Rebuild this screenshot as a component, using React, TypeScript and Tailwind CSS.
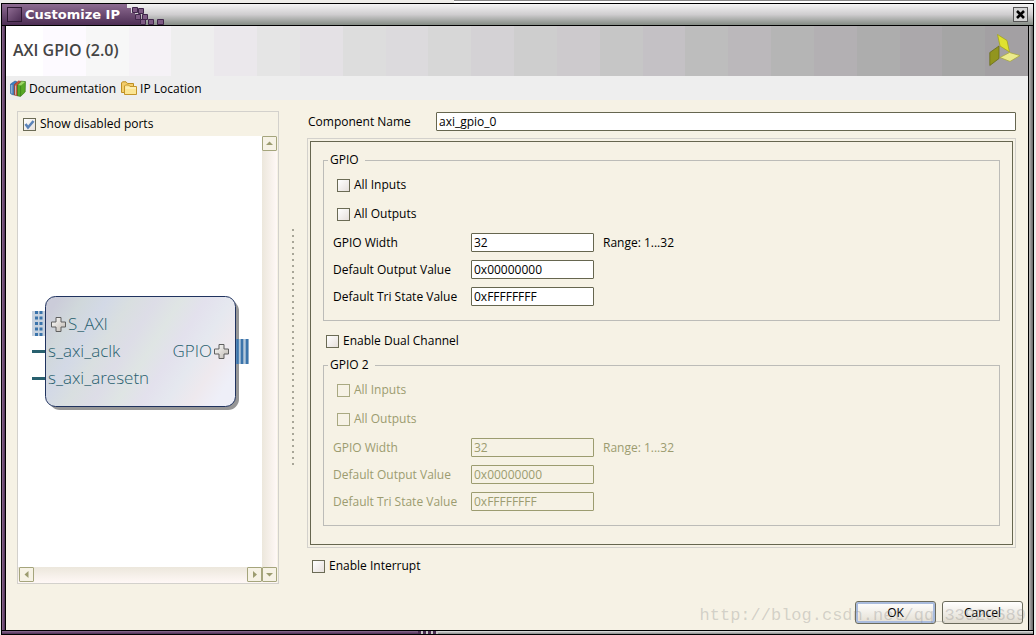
import { useState } from 'react';
import { clsx } from 'clsx';

interface CheckProps {
  id: string;
  label: string;
  checked?: boolean;
  disabled?: boolean;
  onChange?: (checked: boolean) => void;
}

const Check = ({ id, label, checked = false, disabled = false, onChange }: CheckProps) => (
  <label htmlFor={id} className={clsx('flex items-center gap-1 leading-4', disabled ? 'text-[#9c9c70]' : 'text-black')}>
    <span className="relative flex h-[13px] w-[13px] shrink-0">
      <input
        id={id}
        type="checkbox"
        checked={checked}
        disabled={disabled}
        onChange={(e) => onChange?.(e.target.checked)}
        className={clsx(
          'h-[13px] w-[13px] appearance-none border',
          disabled ? 'border-[#a9a981] bg-[#f6f2e5]' : 'border-[#6b6b55] bg-linear-to-br from-white to-[#e6e0dc]',
        )}
      />
      {checked && (
        <svg viewBox="0 0 13 13" className="pointer-events-none absolute inset-0 h-[13px] w-[13px]">
          <path d="M2.5 6 L5 9.5 L10.5 3" fill="none" stroke="#5b83b8" strokeWidth="2.6" />
        </svg>
      )}
    </span>
    {label}
  </label>
);

interface FieldProps {
  id: string;
  label: string;
  value: string;
  hint?: string;
  disabled?: boolean;
}

const Field = ({ id, label, value, hint, disabled = false }: FieldProps) => (
  <div className={clsx('flex h-[19px] items-center', disabled ? 'text-[#9c9c70]' : 'text-black')}>
    <label htmlFor={id} className="w-[138px] shrink-0 whitespace-nowrap">{label}</label>
    <input
      id={id}
      type="text"
      defaultValue={value}
      disabled={disabled}
      className={clsx(
        'h-[19px] w-[123px] rounded-[1px] border px-0.5 outline-none',
        disabled ? 'border-[#9c9c70] bg-[#f6f2e5]' : 'border-[#66664f] bg-white',
      )}
    />
    {hint && <span className="ml-[9px]">{hint}</span>}
  </div>
);

interface ChannelProps {
  id: string;
  title: string;
  disabled?: boolean;
}

const Channel = ({ id, title, disabled }: ChannelProps) => {
  const [inputs, setInputs] = useState(false);
  const [outputs, setOutputs] = useState(false);

  return (
    <fieldset className="border border-[#bcbcb8] pb-[14px] pl-[9px]">
      <legend className="-ml-[5px] pr-1.5 pl-0.5 leading-4">{title}</legend>
      <div className="flex flex-col gap-[13px] pt-[9px] pl-1">
        <Check id={`${id}-inputs`} label="All Inputs" checked={inputs} disabled={disabled} onChange={setInputs} />
        <Check id={`${id}-outputs`} label="All Outputs" checked={outputs} disabled={disabled} onChange={setOutputs} />
      </div>
      <div className="flex flex-col gap-2 pt-[11px]">
        <Field id={`${id}-width`} label="GPIO Width" value="32" hint="Range: 1...32" disabled={disabled} />
        <Field id={`${id}-output`} label="Default Output Value" value="0x00000000" disabled={disabled} />
        <Field id={`${id}-tri`} label="Default Tri State Value" value="0xFFFFFFFF" disabled={disabled} />
      </div>
    </fieldset>
  );
};

const arrows = {
  up: 'M3 8 L6.5 4.5 L10 8 Z',
  down: 'M3 5 L6.5 8.5 L10 5 Z',
  left: 'M8.5 3 L4.5 6.5 L8.5 10 Z',
  right: 'M5 3 L9 6.5 L5 10 Z',
};

const ScrollButton = ({ dir }: { dir: keyof typeof arrows }) => (
  <button type="button" aria-label={`Scroll ${dir}`} className="h-[15px] w-[15px] shrink-0 rounded-[1px] border border-[#a5a57c] bg-[#f6f2e5]">
    <svg viewBox="0 0 13 13" className="h-[13px] w-[13px]">
      <path d={arrows[dir]} fill="#9c9c70" />
    </svg>
  </button>
);

const plus = 'M5 0.5 H10 V5 H14.5 V10 H10 V14.5 H5 V10 H0.5 V5 H5 Z';

// Tints that run diagonally across the block
const sheen = ['#cbccd9', '#d0d8db', '#d3d9e6', '#d9dfe0', '#dddde7', '#dfe5e4', '#e3e1ed', '#e5e8ef', '#eee9ee', '#eeeff8'];

const BlockDiagram = () => (
  <svg width="222" height="120" viewBox="0 0 222 120" fontSize="17" fontWeight="300" fill="#28606e" role="img" aria-label="AXI GPIO block symbol">
    <defs>
      <linearGradient id="block" gradientUnits="userSpaceOnUse" x1="30" y1="0" x2="190" y2="100">
        {sheen.map((color, i) => (
          <stop key={color} offset={i / (sheen.length - 1)} stopColor={color} />
        ))}
      </linearGradient>
      <linearGradient id="plus" x1="0" y1="0" x2="1" y2="1">
        <stop offset="0" stopColor="#fff" />
        <stop offset="1" stopColor="#bdb6ae" />
      </linearGradient>
    </defs>
    <rect x="18" y="6" width="190" height="110" rx="11" fill="#969696" />
    <rect x="14.5" y="2.5" width="190" height="110" rx="10" fill="url(#block)" stroke="#20335f" />
    <rect x="1" y="17" width="13" height="25" fill="#c7d2df" />
    <path d="M5.5 17 V42 M10 17 V42" stroke="#3b74ab" strokeWidth="3" strokeDasharray="3 2.5" fill="none" />
    <path d="M1 57.5 H14 M1 84.5 H14" stroke="#28606e" strokeWidth="3" />
    <rect x="205" y="45" width="13" height="25" fill="#b5c9dc" />
    <path d="M206.5 45 V70 M211 45 V70 M216 45 V70" stroke="#3b74ab" strokeWidth="2.6" />
    <path d={plus} transform="translate(20 23)" fill="url(#plus)" stroke="#5f5f5f" />
    <path d={plus} transform="translate(183 50)" fill="url(#plus)" stroke="#5f5f5f" />
    <text x="37" y="36">S_AXI</text>
    <text x="17" y="63">s_axi_aclk</text>
    <text x="17" y="90">s_axi_aresetn</text>
    <text x="181" y="63" textAnchor="end">GPIO</text>
  </svg>
);

const BooksIcon = () => (
  <svg width="16" height="17" viewBox="0 0 16 17">
    <path d="M0.5 4 L5 1 L7 1.8 L4.5 4.8 L4.5 15 L2 14.5 L0.5 13.5 Z" fill="#3f7fc0" stroke="#2c5f96" strokeWidth="0.6" />
    <path d="M4.3 4.6 L8.5 1 L11 1.4 L7.5 5.2 L7.5 15.8 L4.3 15 Z" fill="#c8543a" stroke="#8c2f20" strokeWidth="0.6" />
    <path d="M7.5 5 L11.5 1.2 L15.5 1.6 L15.2 12 L10.5 16.5 L7.5 15.8 Z" fill="#57a827" stroke="#2f6d14" strokeWidth="0.6" />
    <path d="M8 5 L11.8 1.6 L15 2 L11 5.5 Z" fill="#9fd468" />
    <path d="M10.6 5.8 V16" stroke="#3f8a1c" />
    <path d="M1.8 5 V13.5 M5.6 5.6 V14.8" stroke="#c9d6e4" strokeWidth="0.8" />
  </svg>
);

const FolderIcon = () => (
  <svg width="16" height="15" viewBox="0 0 16 15">
    <path d="M0.5 11.5 V2 L1.5 0.8 H5 L6.5 2.5 H12.5 V11.5 Z" fill="#f3cd6b" stroke="#bd8f23" />
    <path d="M3.5 13.5 V5 L4.5 4 H7.5 L9 5.5 H15.5 V13.5 Z" fill="#fbe594" stroke="#c4952a" />
    <path d="M4.5 7 H15" stroke="#fff7cf" />
  </svg>
);

const Logo = () => (
  <svg width="32" height="33" viewBox="0 0 32 33">
    <path d="M8.5 0.5 L18 6.5 L20.5 18 L11 12 Z" fill="#e0e22f" stroke="#a2a31e" strokeWidth="0.8" />
    <path d="M0.8 18.5 L10 12 V24.5 L0.8 31.5 Z" fill="#92951f" stroke="#696c17" strokeWidth="0.8" />
    <path d="M11 23.5 L20.5 18.5 L31 21.5 L21 27.5 Z" fill="#ebeb8c" stroke="#a8a83f" strokeWidth="0.8" />
  </svg>
);

// Stepped shades of the banner, left to right
const bands = [
  'bg-[#ffffff]', 'bg-[#fdfaff]', 'bg-[#f7f7f7]', 'bg-[#f5f2f6]', 'bg-[#eeeeee]', 'bg-[#ebe8ec]',
  'bg-[#e5e5e5]', 'bg-[#e4e1e5]', 'bg-[#dddddd]', 'bg-[#dcdadd]', 'bg-[#d7d7d7]', 'bg-[#d4d2d5]',
  'bg-[#cecece]', 'bg-[#cdcacd]', 'bg-[#c6c6c6]', 'bg-[#c4c1c5]', 'bg-[#bdbdbd]', 'bg-[#bbb8bb]',
  'bg-[#b5b5b5]', 'bg-[#b3b0b3]', 'bg-[#adadad]', 'bg-[#aba8ab]', 'bg-[#a5a5a5]', 'bg-[#a3a0a3]',
];

const TitleBar = () => (
  <div className="flex h-[23px] shrink-0 border-y border-black bg-linear-to-b from-[#f4f4f4] via-[#cfcdcf] to-[#858c85]">
    <div className="flex items-center gap-[3px] bg-linear-to-b from-[#8d6b91] to-[#4d2e54] pl-[5px]">
      <span className="h-[15px] w-[15px] border border-[#2b1730] bg-linear-to-br from-[#8d6b91] to-[#4d2e54]" />
      <h1 className="text-[13px] leading-4 font-bold text-white [font-family:'DejaVu_Sans',sans-serif]">Customize IP</h1>
    </div>
    <svg width="46" height="21" viewBox="0 0 46 21" className="shrink-0">
      <defs>
        <linearGradient id="cap" x1="0" y1="0" x2="0" y2="1">
          <stop offset="0" stopColor="#8d6b91" />
          <stop offset="1" stopColor="#4d2e54" />
        </linearGradient>
      </defs>
      <path d="M0 0 H7 V4 H11 V9 H15 V15 H20 V21 H0 Z" fill="url(#cap)" />
      <path
        d="M12.5 3.5 h5 v5 h-5 Z M18.5 4.5 h5 v5 h-5 Z M15.5 10.5 h5 v5 h-5 Z M22.5 10.5 h5 v5 h-5 Z M20.5 15.5 h5 v5 h-5 Z M28.5 15.5 h5 v5 h-5 Z M37.5 15.5 h6 v5 h-6 Z"
        fill="#7d5a83"
        stroke="#40264a"
      />
    </svg>
    <button type="button" aria-label="Close" className="mt-[3px] mr-[5px] ml-auto flex h-[15px] w-[15px] items-center justify-center border border-[#555] bg-[#d4d4d4]">
      <svg width="9" height="9" viewBox="0 0 9 9">
        <path d="M1 1 L8 8 M8 1 L1 8" stroke="#000" strokeWidth="2.6" />
      </svg>
    </button>
  </div>
);

export default function App() {
  const [showDisabled, setShowDisabled] = useState(true);
  const [dual, setDual] = useState(false);
  const [interrupt, setInterrupt] = useState(false);

  return (
    <div className="flex min-h-screen flex-col bg-[#ededed] pr-0.5 pl-px text-[12px] text-black [font-family:'Open_Sans','Noto_Sans',sans-serif]">
      <div className="flex h-[3px] shrink-0">
        <span className="w-[453px] bg-[#eeede9]" />
        <span className="flex-1 border-t border-[#888] bg-white" />
      </div>
      <div className="flex flex-1 flex-col border-x border-b border-black">
        <TitleBar />
        <div className="flex flex-1">
          <div className="w-1 shrink-0 border-r border-black bg-linear-to-r from-[#8d6b91] to-[#4d2e54]" />
          <main className="flex min-w-0 flex-1 flex-col bg-[#f6f2e5]">
            <header className="relative flex h-[50px] items-center justify-between px-[7px] pb-0.5">
              <div className="absolute inset-0 flex">
                {bands.map((band, i) => (
                  <span key={band} className={clsx(i === 0 ? 'w-[37px]' : 'flex-1', band)} />
                ))}
              </div>
              <h2 className="relative text-[16px] leading-6 font-semibold text-[#444]">AXI GPIO (2.0)</h2>
              <div className="relative">
                <Logo />
              </div>
            </header>
            <nav className="flex h-6 items-center gap-[5px] bg-[#eeeeee] pt-px pl-1">
              <a href="#documentation" className="flex items-center gap-[3px]">
                <BooksIcon />
                Documentation
              </a>
              <a href="#location" className="flex items-center gap-[3px]">
                <FolderIcon />
                IP Location
              </a>
            </nav>

            <div className="flex flex-1 pt-[11px] pr-3 pl-[11px]">
              <section className="flex w-[262px] shrink-0 flex-col border border-[#d3d1cc] pr-px">
                <div className="flex h-6 items-center pl-[5px]">
                  <Check id="show-disabled" label="Show disabled ports" checked={showDisabled} onChange={setShowDisabled} />
                </div>
                <div className="flex flex-1">
                  <div className="flex flex-1 items-center bg-white pt-1 pl-[13px]">
                    <BlockDiagram />
                  </div>
                  <div className="flex w-[15px] flex-col bg-linear-to-r from-[#ece7dc] to-[#fff8f6]">
                    <ScrollButton dir="up" />
                  </div>
                </div>
                <div className="flex h-4 bg-linear-to-b from-[#ece7dc] to-[#fff8f6] pl-px">
                  <ScrollButton dir="left" />
                  <span className="flex-1" />
                  <ScrollButton dir="right" />
                  <ScrollButton dir="down" />
                </div>
              </section>

              <div className="flex w-7 shrink-0 items-center justify-center">
                <span className="h-[242px] w-0.5 bg-[radial-gradient(circle,#a8a698_1px,transparent_1px)] bg-[length:2px_6px]" />
              </div>

              <form id="ip-form" className="flex min-w-0 flex-1 flex-col" onSubmit={(e) => e.preventDefault()}>
                <div className="flex items-center pt-px pl-px">
                  <label htmlFor="component-name" className="w-32 shrink-0">Component Name</label>
                  <input
                    id="component-name"
                    type="text"
                    defaultValue="axi_gpio_0"
                    className="h-[19px] min-w-0 flex-1 rounded-[1px] border border-[#66664f] bg-white px-0.5 outline-none"
                  />
                </div>
                <div className="mt-[7px] border border-[#d3d1cc] p-0.5">
                  <div className="border border-[#66664f] px-3 pt-2.5 pb-[18px]">
                    <Channel id="gpio" title="GPIO" />
                    <div className="pt-3 pb-2 pl-[3px]">
                      <Check id="dual" label="Enable Dual Channel" checked={dual} onChange={setDual} />
                    </div>
                    <Channel id="gpio2" title="GPIO 2" disabled={!dual} />
                  </div>
                </div>
                <div className="pt-[10px] pl-[5px]">
                  <Check id="interrupt" label="Enable Interrupt" checked={interrupt} onChange={setInterrupt} />
                </div>
              </form>
            </div>

            <footer className="relative flex justify-end gap-1.5 pt-[17px] pr-[5px] pb-1.5">
              <button type="submit" form="ip-form" className="h-[23px] w-[81px] rounded-[3px] border border-[#6b6b5c] bg-linear-to-b from-white to-[#e4dfd3] inset-ring-2 inset-ring-[#a9bbdd]">OK</button>
              <button type="button" className="h-[23px] w-[81px] rounded-[3px] border border-[#6b6b5c] bg-linear-to-b from-white to-[#e0dbcf]">Cancel</button>
              <span className="pointer-events-none absolute right-0.5 bottom-0.5 text-[17px] leading-6 text-[#8080804d] [font-family:'Liberation_Mono',monospace]">
                http://blog.csdn.net/qq_33929689
              </span>
            </footer>
          </main>
          <div className="w-[5px] shrink-0 border-l border-black bg-linear-to-r from-[#bbb] to-[#666]" />
        </div>
        <div className="flex h-1 shrink-0 border-t border-black bg-linear-to-b from-[#e4e4e4] to-[#888]">
          <span className="w-[416px] bg-linear-to-b from-[#8d6b91] to-[#4d2e54]" />
          <span className="w-5 bg-[repeating-linear-gradient(90deg,#4d2e54_0_3px,#c8c4c8_3px_5px)]" />
        </div>
      </div>
    </div>
  );
}
